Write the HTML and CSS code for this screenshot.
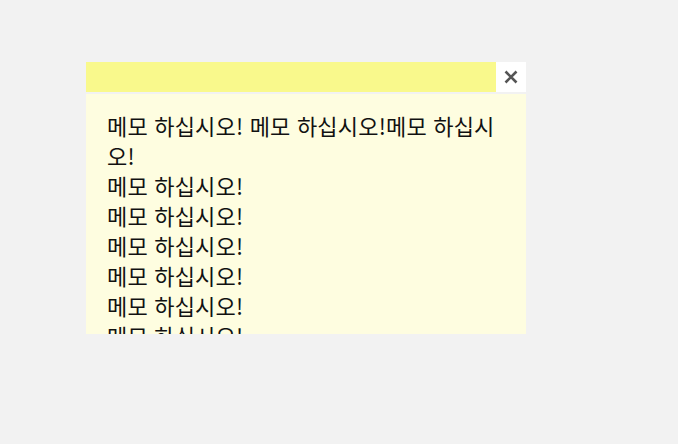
FILE: index.html
```html
<!DOCTYPE html>
<html lang="ko">
<head>
<meta charset="utf-8">
<link rel="stylesheet" href="styles.css">
</head>
<body>
<div class="note">
  <div class="note-head">
    <div class="note-bar"></div>
    <button class="note-close" aria-label="close">
      <svg width="14" height="14" viewBox="0 0 14 14"><path d="M1.5 1.5 L12.5 12.5 M12.5 1.5 L1.5 12.5" stroke="#555" stroke-width="2.6" stroke-linecap="butt"/></svg>
    </button>
  </div>
  <div class="note-body">메모 하십시오! 메모 하십시오!메모 하십시오!<br>메모 하십시오!<br>메모 하십시오!<br>메모 하십시오!<br>메모 하십시오!<br>메모 하십시오!<br>메모 하십시오!<br>메모 하십시오!</div>
</div>
</body>
</html>
```
FILE: styles.css
```css
html, body {
  margin: 0;
  padding: 0;
  background: #f2f2f2;
}
body {
  padding: 62px 0 0 86px;
  font-family: "Noto Sans CJK KR", "Noto Sans", sans-serif;
}
.note {
  width: 440px;
  display: flex;
  flex-direction: column;
  gap: 2px;
}
.note-head {
  display: flex;
  height: 30px;
}
.note-bar {
  flex: 1;
  background: #f9f98c;
}
.note-close {
  width: 30px;
  height: 30px;
  border: 0;
  padding: 0;
  margin: 0;
  background: #ffffff;
  display: flex;
  align-items: center;
  justify-content: center;
}
.note-body {
  height: 240px;
  box-sizing: border-box;
  overflow: hidden;
  background: #fefde0;
  padding: 16px 20px 0 21px;
  font-size: 22px;
  letter-spacing: 0.2px;
  line-height: 30px;
  color: #111;
  word-break: break-all;
}
```
